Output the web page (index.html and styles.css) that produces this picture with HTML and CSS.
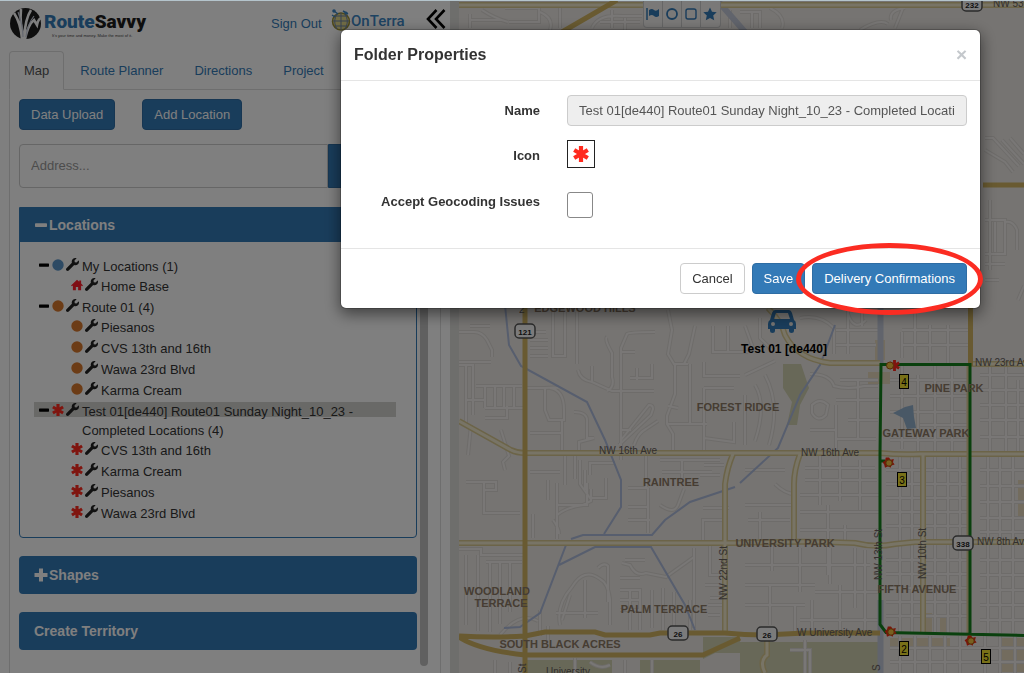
FILE: index.html
```html
<!DOCTYPE html>
<html lang="en">
<head>
<meta charset="utf-8">
<meta name="viewport" content="width=device-width, initial-scale=1">
<title>RouteSavvy</title>
<link rel="stylesheet" href="styles.css">
</head>
<body>
<svg class="defs" width="0" height="0" aria-hidden="true">
  <defs>
    <symbol id="wrench" viewBox="0 0 512 512"><path d="M507.73 109.1c-2.24-9.03-13.54-12.09-20.12-5.51l-74.36 74.36-67.88-11.31-11.31-67.88 74.36-74.36c6.62-6.62 3.43-17.9-5.66-20.16-47.38-11.74-99.55.91-136.58 37.93-39.64 39.64-50.55 97.1-34.05 147.2L18.74 402.76c-24.99 24.99-24.99 65.51 0 90.5 24.99 24.99 65.51 24.99 90.5 0l213.21-213.21c50.12 16.71 107.47 5.68 147.37-34.22 37.07-37.07 49.7-89.32 37.91-136.73z"/></symbol>
    <symbol id="asterisk" viewBox="0 0 16 16"><path d="M8 0V16M1.200 4l13.600 8M14.800 4L1.200 12" fill="none" stroke="#ff2a1e" stroke-width="4.200"/></symbol>
    <symbol id="home" viewBox="0 0 16 16"><path fill="#ff1d2a" d="M8 1L0 8.5l1.2 1.2L2.5 8.500V15h4v-4.500h3V15h4V8.500l1.300 1.200L16 8.500l-2.500-2.400V2h-2.500v1.800z"/></symbol>
    <symbol id="minus" viewBox="0 0 10 10"><rect y="3.500" width="10" height="3.200" rx=".6"/></symbol>
    <symbol id="plus" viewBox="0 0 14 14"><path d="M5 .5h4V5h4.500v4H9v4.500H5V9H.5V5H5z"/></symbol>
    <symbol id="dot" viewBox="0 0 12 12"><circle cx="6" cy="6" r="5.700"/></symbol>
  </defs>
</svg>

<div class="app">
  <aside class="sidebar">
    <header class="brand">
      <div class="logo">
        <svg class="logo-mark" viewBox="0 0 33 32" aria-hidden="true">
          <circle cx="16.500" cy="15.500" r="15.500" fill="#1c1c1c"/>
          <path d="M5 5c4 6 7 14 8 26M12 1c-1 10 0 20 3 30M15 30C16 16 18 8 22 2M16 31c2-9 5-16 9-19l3 5c1-5 3-7 5-7" fill="none" stroke="#fff" stroke-width="2.600"/>
          <path d="M9 4c3 8 5 14 5 25M17 29c1-10 4-16 8-21" fill="none" stroke="#c9cfdf" stroke-width="1.200"/>
        </svg>
        <div class="logo-words">
          <span class="logo-name"><b class="blue">Route</b><b>Savvy</b></span>
          <span class="logo-tag">It's your time and money. Make the most of it.</span>
        </div>
      </div>
      <a class="sign-out" href="#">Sign Out</a>
      <div class="partner">
        <svg class="globe" viewBox="0 0 20 24" aria-hidden="true">
          <circle cx="10" cy="13.500" r="8.500" fill="#e2d88b" stroke="#9a8f35" stroke-width="1.500"/>
          <path d="M2 13h16M4 8h12M4 18h12M10 5v17M6 6c-3 5-3 10 0 15M14 6c3 5 3 10 0 15" fill="none" stroke="#6d83a8" stroke-width="1"/>
          <path d="M3 3l4 3M12 3l5 3M1 7l3 2" stroke="#3c86c4" stroke-width="1.500"/>
          <circle cx="3" cy="3" r="1.800" fill="#3c86c4"/><circle cx="15" cy="5" r="1.600" fill="#3c86c4"/>
        </svg>
        <span class="partner-name">OnTerra</span>
      </div>
      <button class="collapse" type="button" aria-label="Collapse panel">
        <svg viewBox="0 0 20 20"><path d="M10.500 1L2 10l8.500 9M18.500 1L10 10l8.500 9" fill="none" stroke="#000" stroke-width="2.600"/></svg>
      </button>
    </header>

    <nav class="tabs">
      <a class="tab active" href="#">Map</a>
      <a class="tab" href="#">Route Planner</a>
      <a class="tab" href="#">Directions</a>
      <a class="tab" href="#">Project</a>
    </nav>

    <div class="pane">
      <div class="pane-content">
        <div class="actions">
          <button class="btn primary" type="button">Data Upload</button>
          <button class="btn primary" type="button">Add Location</button>
        </div>
        <div class="search">
          <input class="search-input" type="text" placeholder="Address..." aria-label="Address">
          <button class="search-go" type="button" aria-label="Search"></button>
        </div>

        <section class="panel">
          <h2 class="panel-title open"><svg class="title-icon"><use href="#minus"/></svg>Locations</h2>
          <ul class="tree">
            <li><div class="row"><svg class="fold"><use href="#minus"/></svg><svg class="mark blue-dot"><use href="#dot"/></svg><svg class="wrench"><use href="#wrench"/></svg><span class="label">My Locations (1)</span></div>
              <ul>
                <li class="row child"><svg class="mark"><use href="#home"/></svg><svg class="wrench"><use href="#wrench"/></svg><span class="label">Home Base</span></li>
              </ul>
            </li>
            <li><div class="row"><svg class="fold"><use href="#minus"/></svg><svg class="mark orange-dot"><use href="#dot"/></svg><svg class="wrench"><use href="#wrench"/></svg><span class="label">Route 01 (4)</span></div>
              <ul>
                <li class="row child"><svg class="mark orange-dot"><use href="#dot"/></svg><svg class="wrench"><use href="#wrench"/></svg><span class="label">Piesanos</span></li>
                <li class="row child"><svg class="mark orange-dot"><use href="#dot"/></svg><svg class="wrench"><use href="#wrench"/></svg><span class="label">CVS 13th and 16th</span></li>
                <li class="row child"><svg class="mark orange-dot"><use href="#dot"/></svg><svg class="wrench"><use href="#wrench"/></svg><span class="label">Wawa 23rd Blvd</span></li>
                <li class="row child"><svg class="mark orange-dot"><use href="#dot"/></svg><svg class="wrench"><use href="#wrench"/></svg><span class="label">Karma Cream</span></li>
              </ul>
            </li>
            <li><div class="row selected"><svg class="fold"><use href="#minus"/></svg><svg class="mark"><use href="#asterisk"/></svg><svg class="wrench"><use href="#wrench"/></svg><span class="label">Test 01[de440] Route01 Sunday Night_10_23 - Completed Locations (4)</span></div>
              <ul>
                <li class="row child"><svg class="mark"><use href="#asterisk"/></svg><svg class="wrench"><use href="#wrench"/></svg><span class="label">CVS 13th and 16th</span></li>
                <li class="row child"><svg class="mark"><use href="#asterisk"/></svg><svg class="wrench"><use href="#wrench"/></svg><span class="label">Karma Cream</span></li>
                <li class="row child"><svg class="mark"><use href="#asterisk"/></svg><svg class="wrench"><use href="#wrench"/></svg><span class="label">Piesanos</span></li>
                <li class="row child"><svg class="mark"><use href="#asterisk"/></svg><svg class="wrench"><use href="#wrench"/></svg><span class="label">Wawa 23rd Blvd</span></li>
              </ul>
            </li>
          </ul>
        </section>

        <h2 class="panel-title"><svg class="title-icon plus"><use href="#plus"/></svg>Shapes</h2>
        <h2 class="panel-title">Create Territory</h2>
      </div>
      <div class="scroll-thumb"></div>
    </div>
  </aside>

  <main class="map">
    <svg class="map-canvas" viewBox="459 1 565 672" preserveAspectRatio="xMinYMin slice" role="img" aria-label="Street map">
      <defs>
        <path id="streets" d="
          M470 326h20M459 332h15q8 0 13 8l5 10v7M459 362h32M459 365h14v50M466 365v60M476 386h46M485 386v22M495 386v22M504 386v22M514 386v22M485 408h38M466 400h20M485 418h22v-8M507 418v-12M471 425l-3 30M501 430l8 26-6 6 2 8M466 482h30v8h-12v-8
          M530 332h16M530 340h18M530 348h18M530 356h18M553 310v46h12v-44M577 312v52M559 388q-4-1-14 0h-18M545 388v22l4 10h15v-10q0-20-14-22M530 433h32v18M562 420v22M574 412q14 0 13 10v16h7l-15 4v10
          M578 370q2 10 14 12l20 9h42M607 391q8-4 5-14v-24q-8-14-5-16M592 366v16M630 378h22v-14M637 368v12M621 460v-112l6-14q2-2 28-2M621 352h14M621 440l28-35q4 0 4 4l-2 6-32 30M621 430h10M634 445q4-12 12-16l12-8
          M668 310l4 20-4 24 6 10h14M684 364l5-10 6-28M675 364v30l-8 22v8l6 10v18M690 364v60M668 406l10 2M667 424h40M713 326v26h35M728 326v26M704 362v14h36M704 388v62M704 388h30M704 438l30 4v-20
          M565 455v30M575 455v24M585 470v20M590 475v-12h25M560 472h-30M548 480v20M580 460v24l10 14h16v-20M646 456v32M660 460h60M662 472h50M682 460v24M704 465h20M700 475h20M628 507h20M628 520h22M648 488v45M628 488h20M660 505q14 10 18 0l6-16
          M466 555v70M478 555v76M490 562v70M500 562v62M510 562v50M459 549h22v6h42M486 562h36M557 483v56M557 505h30v-22M553 520q6 8 6 14M557 515q10-8 26-10l8-4v-12M533 514v24M484 483v30h36
          M560 625q-4-20 12-38 12-20 28-8 8 4 10 20v26M556 613h42M585 580v38M570 595l-8 25M620 590h20v40M620 600h20M620 610h20M630 590v40M598 568q6-6 10-2v36M622 563l8 2q6 12 16 8l20 4 28-20M640 578h-20M652 590v38M663 588v42M674 592v38M690 600v30M694 548v80M710 545v30h14M705 585h20M710 598h14M708 605h16M708 615h12M703 508h26M703 540v-20h20
          M645 560h-20M548 640v-14M540 610v26M500 635q20-24 38-14M575 658v15M590 662q10 8 20 3M625 660v13M652 660v13M495 660v13M510 662v11
          M745 326l8 22M760 318v20l14 14M800 318q20-4 34 10v26M848 314q6 18 18 6M836 330h44M836 345h40M848 310v44M862 312v14M836 400h44M840 380h38M745 395v50M755 385q12 20 0 56M765 375q16 30 4 70M745 375l30-14M810 374q20 0 24 12 14 4 30 0h14M812 405q8-8 16 0l-2 10q-8 8-14-2zM836 405v34h40M858 380v60M848 420h30M810 430h26v22
          M745 470h40M805 468h70M805 480h72M820 455v50M840 455v46M860 460v50M745 505h46M800 495h80M800 512h80M828 505v70M748 520h42M760 512v30M775 484q10 10 20 10M800 530h80M845 525v20M745 565h125M772 543v28M800 548v44M830 548v36M745 585h70M855 548v60M815 592h64M840 585v45M865 550v80M745 605h60M770 585v40M795 605v26M800 620h78M812 600v30
          M902 330h66M902 345h66M902 332v26M915 310v50M930 325v36M948 325v38M890 380h78M890 396h78M902 364v85M918 375v76M935 364v88M952 364v92M890 412h76M920 425h50M890 440h80M886 470h84M886 484h84M886 498h84M886 512h84M886 526h84M900 455v178M912 455v178M935 455v178M948 455v178M960 455v178M886 560h84M886 574h84M886 588h84M886 602h84M886 616h84
          M980 375h44M980 390h44M980 405h44M980 420h44M980 437h44M990 364v90M1006 364v90M1018 380v74M980 470h44M980 486h44M980 502h44M980 518h44M980 532h44M988 455v178M1000 455v178M1013 455v178M980 560h44M980 575h44M980 590h44M980 605h44M980 620h44
          M890 648h134M890 662h134M900 636v37M915 636v37M930 636v37M945 636v37M960 636v37M985 636v37M1000 636v37M1015 636v37M790 650h20v23M805 640v33
          M985 138h8l26 28M1002 140l22 24M1010 138l14 16M985 150l20 12 8 10
          M985 220h20v34h-20M995 222v30M1005 222q8-2 12 8v20M985 264h20M985 280h14M990 200v70M1024 286l-6 14
          M470 14v14M470 20h30M482 10q12 8 26 12M505 8h34v14h-30M540 12q14 6 10 18M560 8v20M592 28q6-14 30-12h20M612 10v18M625 18v12M600 22h40M730 10v18M740 12h20v16M752 12v16M770 8q16 8 12 20M860 30q20-12 28-6M895 28l8-20M905 8q-16 2-14 12"/>
        <path id="avenues" d="M459 421l52 29q6 3 14 3h355q20 2 40 1h104M459 543h276q60-2 90-1l30 1q20 5 40 1l20-2h109M725 633V484q2-16 8-30M794 540v-56q0-14 6-30M923 455v177M768 308q14 14 17 27 12 24 45 28h50M459 5h565M970 364h54M765 673q-6-12 2-18v-18"/>
        <g id="shield"><rect x="-10" y="-7" width="20" height="14" rx="4" fill="#f7f7f7" stroke="#555" stroke-width="1.500"/></g>
        <g id="stop"><path transform="scale(.8)" d="M0-7l2 3 4-1-1 4 2 3-4 1-1 3-3-2-4 2-1-4-2-3 3-2 1-4z" fill="#f02a10"/><circle r="3.200" fill="#f0c040" stroke="#b05a10"/></g>
      </defs>
      <rect class="land" x="459" y="0" width="900" height="1000"/>
      <g class="park">
        <path d="M783 364h18l8 24-9 17-3 20h-10l5-23-9-14zM527 660h85v13h-85zM640 660h60v13h-60zM703 637h37v16h-25l-12 6zM740 642h138v31H740z"/>
      </g>
      <g class="town"><path d="M922 613h10v20h-10zM890 638h60v8h-60zM1000 638h24v34h-24zM875 340h10v20h-10zM868 372h22v12h-22zM1018 480h6v40h-6zM940 618h8v14h-8z"/></g>
      <use href="#streets" class="street-case"/>
      <use href="#streets" class="street"/>
      <path class="water-fill" d="M893 413l12-6 8-2 1 12 2 11-9 1-4-11z"/>
      <path class="creek" d="M505 305l4 40 12 21 66 36 18 38 16 40v27l-17 27M571 539l12-4h69l13-15 25-18 45-15M566 545l-26 68-20 14-16 1M559 565l36-18h56l34 58 10 25M835 325l-15 40-20 30-22 53-38 35M448 8l5 20"/>
      <path class="canal" d="M880.500 300v64M880.500 600v73M717 0l28 32"/>
      <use href="#avenues" class="road-case"/>
      <use href="#avenues" class="road"/>
      <g class="highway">
        <path d="M525 300v373M459 636q36 2 66 0l20-4h50l10 3h45l10-2h65q20 2 40 2l40-2h75M459 637q20 13 66 18h178l37-17M970.500 300v66M562 32l55-32M983 185h41"/>
        <path class="thin" d="M968 364v270"/>
      </g>
      <path class="route" d="M970 634V364.500h-89l-1 90v170l6 8 138 3"/>
      <path class="route" d="M880 461h5"/>

      <g class="place" text-anchor="middle">
        <text x="585" y="312">EDGEWOOD HILLS</text>
        <text x="738" y="411">FOREST RIDGE</text>
        <text x="671" y="486">RAINTREE</text>
        <text x="954" y="392">PINE PARK</text>
        <text x="926" y="437">GATEWAY PARK</text>
        <text x="785" y="547">UNIVERSITY PARK</text>
        <text x="497" y="595">WOODLAND</text>
        <text x="501" y="607">TERRACE</text>
        <text x="664" y="613">PALM TERRACE</text>
        <text x="560" y="648">SOUTH BLACK ACRES</text>
        <text x="917" y="593">FIFTH AVENUE</text>
      </g>
      <g class="road-name">
        <text x="519" y="313">2</text>
        <text x="599" y="454">NW 16th Ave</text>
        <text x="801" y="456">NW 16th Ave</text>
        <text x="975" y="366">NW 23rd Ave</text>
        <text x="977" y="545">NW 8th Ave</text>
        <text x="797" y="636">W University Ave</text>
        <text x="993" y="7">NW 53rd Ave</text>
        <text x="546" y="675">University</text>
        <text transform="translate(727 600) rotate(-90)">NW 22nd St</text>
        <text transform="translate(882 580) rotate(-90)">NW 13th St</text>
        <text transform="translate(926 579) rotate(-90)">NW 10th St</text>
        <text transform="translate(526 673) rotate(-90)">St</text>
        <text transform="translate(880 671) rotate(-90)">S</text>
      </g>
      <g class="shield-text" text-anchor="middle">
        <use href="#shield" x="525" y="331"/><text x="525" y="335">121</text>
        <use href="#shield" x="972" y="4"/><text x="972" y="8">232</text>
        <use href="#shield" x="678" y="633"/><text x="678" y="637">26</text>
        <use href="#shield" x="767" y="634"/><text x="767" y="638">26</text>
        <use href="#shield" x="963" y="543"/><text x="963" y="547">338</text>
      </g>

      <g class="vehicle" transform="translate(768 310)">
        <path fill-rule="evenodd" d="M7 0h14q2 0 3 3l2 7q2 1 2 4v5h-2v2q0 2-2.500 2T21 21v-2H7v2q0 2-2.500 2T2 21v-2H0v-5q0-3 2-4l2-7q1-3 3-3zM8 3L6 9h16l-2-6zM5 12a2 2 0 100 4 2 2 0 000-4zM23 12a2 2 0 100 4 2 2 0 000-4z"/>
      </g>
      <text class="vehicle-name" x="784" y="353" text-anchor="middle">Test 01 [de440]</text>

      <use href="#asterisk" x="889" y="360" width="11" height="11"/>
      <circle cx="890" cy="365.500" r="3.500" fill="#f0c040" stroke="#b05a10"/>
      <use href="#stop" x="889" y="463"/><use href="#stop" x="891" y="632"/><use href="#stop" x="971" y="641"/>
      <g class="stop-number" text-anchor="middle">
        <rect x="899.500" y="374.500" width="9" height="14"/><text x="904" y="386">4</text>
        <rect x="897.500" y="472.500" width="9" height="14"/><text x="902" y="484">3</text>
        <rect x="899.500" y="641.500" width="9" height="14"/><text x="904" y="653">2</text>
        <rect x="981.500" y="649.500" width="9" height="14"/><text x="986" y="661">5</text>
      </g>
    </svg>
    <div class="map-tools">
      <button type="button" aria-label="Flag"><svg viewBox="0 0 14 14"><path d="M1 1v12" stroke="#337ab7" stroke-width="1.500"/><path fill="#337ab7" d="M3 3q3-2 5 0t5-1v7q-3 2-5 0T3 9z"/></svg></button>
      <button type="button" aria-label="Circle"><svg viewBox="0 0 14 14"><circle cx="7" cy="7" r="5" fill="none" stroke="#337ab7" stroke-width="1.800"/></svg></button>
      <button type="button" aria-label="Rectangle"><svg viewBox="0 0 14 14"><rect x="2" y="2" width="10" height="10" rx="2" fill="none" stroke="#337ab7" stroke-width="1.400"/></svg></button>
      <button type="button" aria-label="Star"><svg viewBox="0 0 14 14"><path fill="#337ab7" d="M7 .5l2 4.300 4.700.5-3.500 3.200 1 4.700L7 10.900l-4.200 2.300 1-4.700L.3 5.300 5 4.800z"/></svg></button>
    </div>
  </main>
</div>

<div class="backdrop">
  <form class="modal" role="dialog" aria-labelledby="modal-title">
    <header class="modal-header">
      <h1 id="modal-title">Folder Properties</h1>
      <button class="close" type="button" aria-label="Close">×</button>
    </header>
    <div class="modal-body">
      <label for="folder-name">Name</label>
      <input id="folder-name" class="name-input" type="text" value="Test 01[de440] Route01 Sunday Night_10_23 - Completed Locations" readonly>
      <label for="folder-icon">Icon</label>
      <button id="folder-icon" class="icon-picker" type="button"><svg><use href="#asterisk"/></svg></button>
      <label for="accept">Accept Geocoding Issues</label>
      <input id="accept" class="check" type="checkbox">
    </div>
    <footer class="modal-footer">
      <button class="btn plain" type="button">Cancel</button>
      <button class="btn primary" type="button">Save</button>
      <div class="highlighted">
        <button class="btn primary" type="button">Delivery Confirmations</button>
        <span class="ring"></span>
      </div>
    </footer>
  </form>
</div>
</body>
</html>
```

FILE: styles.css
```css
*,
*::before,
*::after {
  box-sizing: border-box;
}

body {
  margin: 0;
  font: 13px/18px "Liberation Sans", Arial, sans-serif;
  color: #333;
  background: #fff;
}

.defs {
  position: absolute;
}

button,
input {
  font: inherit;
  color: inherit;
}

button {
  cursor: pointer;
}

a {
  color: #337ab7;
  text-decoration: none;
}

ul {
  margin: 0;
  padding: 0;
  list-style: none;
}

.app {
  display: flex;
  height: 100vh;
  overflow: hidden;
  border-top: 1px solid #b4c4cc;
}

/* Sidebar */
.sidebar {
  flex: 0 0 450px;
  display: flex;
  flex-direction: column;
  padding-left: 9px;
}

.brand {
  display: flex;
  align-items: flex-start;
  height: 50px;
  padding-top: 7px;
}

.logo {
  display: flex;
  gap: 2px;
  width: 262px;
}

.logo-mark {
  width: 33px;
  height: 32px;
}

.logo-words {
  display: flex;
  flex-direction: column;
}

.logo-name {
  font: bold 19px/27px Roboto, "Liberation Sans", sans-serif;
  color: #1c1c1c;
}

.logo-name .blue {
  color: #337ab7;
}

.logo-tag {
  padding-left: 8px;
  font-size: 4px;
  line-height: 1px;
  color: #444;
}

.sign-out {
  width: 60px;
  padding-top: 7px;
}

.partner {
  display: flex;
  width: 95px;
}

.globe {
  width: 20px;
  height: 24px;
}

.partner-name {
  font: 500 15px/26px Roboto, "Liberation Sans", sans-serif;
  color: #3c86c4;
}

.collapse {
  padding: 0;
  border: 0;
  background: none;
}

.collapse svg {
  display: block;
  width: 20px;
  height: 22px;
}

.tabs {
  display: flex;
  gap: 1px;
  margin-right: 9px;
  border-bottom: 1px solid #ddd;
}

.tab {
  margin-bottom: -1px;
  padding: 10px 14px 9px;
  border: 1px solid transparent;
  border-radius: 4px 4px 0 0;
}

.tab.active {
  color: #555;
  background: #fff;
  border-color: #ddd #ddd #fff;
}

.pane {
  flex: 1;
  display: flex;
  gap: 3px;
  margin-right: 9px;
  padding: 9px 12px 7px 9px;
  border: solid #ddd;
  border-width: 0 1px;
}

.pane-content {
  flex: 1;
}

.scroll-thumb {
  width: 8px;
  border-radius: 4px;
  background: #c1c1c1;
}

.actions {
  display: flex;
  gap: 27px;
}

.btn {
  height: 31px;
  padding: 0 11px;
  border: 1px solid #2e6da4;
  border-radius: 4px;
}

.btn.primary {
  color: #fff;
  background: #337ab7;
}

.btn.plain {
  color: #333;
  background: #fff;
  border-color: #ccc;
}

.search {
  display: flex;
  height: 44px;
  margin: 14px 0 19px;
}

.search-input {
  flex: 1;
  min-width: 0;
  padding: 0 11px;
  border: 1px solid #ccc;
  border-radius: 4px 0 0 4px;
  background: #fff;
}

.search-input::placeholder {
  color: #999;
}

.search-go {
  width: 89px;
  border: 1px solid #2e6da4;
  border-radius: 0 4px 4px 0;
  background: #337ab7;
}

.panel {
  border: 1px solid #337ab7;
  border-radius: 0 0 4px 4px;
}

.panel-title {
  display: flex;
  align-items: center;
  height: 38px;
  margin: 18px 0 0;
  padding: 0 15px;
  border-radius: 4px;
  font-size: 14px;
  line-height: 18px;
  color: #fff;
  background: #337ab7;
}

.panel-title.open {
  height: 34px;
  margin: 0;
  border-radius: 0;
}

.title-icon {
  width: 12px;
  height: 12px;
  margin-right: 2px;
  fill: #fff;
}

.title-icon.plus {
  width: 14px;
  height: 14px;
  margin-right: 1px;
}

.tree {
  padding: 14px 20px 13px 14px;
}

.row {
  display: flex;
  align-items: flex-start;
  min-height: 20px;
  padding-left: 5px;
}

.row.child {
  min-height: 21px;
  padding-left: 37px;
}

.row.selected {
  background: linear-gradient(#d2d2ce, #d2d2ce) no-repeat 0 1px / 100% 15px;
}

.fold,
.mark,
.wrench {
  flex: none;
}

.fold {
  width: 10px;
  height: 10px;
  margin: 4px 3px 0 0;
}

.mark {
  width: 12px;
  height: 12px;
  margin: 3px 2px 0 0;
}

.blue-dot {
  fill: #5a94c8;
}

.orange-dot {
  fill: #d9782c;
}

.wrench {
  width: 13px;
  height: 13px;
  margin: 2px 3px 0 0;
  fill: #222;
}

.label {
  line-height: 19px;
  padding-top: 1px;
}

/* Map */
.map {
  flex: 1;
  position: relative;
  min-width: 0;
  border-left: 9px solid #dddcd9;
}

.map-canvas {
  display: block;
  width: 100%;
  height: 100%;
}

.land {
  fill: #ece8e4;
}

.park {
  fill: #d0d0b0;
}

.town {
  fill: #e6d8bc;
}

.water-fill {
  fill: #93b0cc;
}

.creek,
.canal,
.street,
.street-case,
.road,
.road-case,
.highway,
.route {
  fill: none;
}

.creek {
  stroke: #aebcdc;
  stroke-width: 2px;
}

.canal {
  stroke: #c2c8d8;
  stroke-width: 6px;
}

.street-case {
  stroke: #dcd8d4;
  stroke-width: 4px;
}

.street {
  stroke: #f2efec;
  stroke-width: 2px;
}

.road-case {
  stroke: #d8c890;
  stroke-width: 6px;
}

.road {
  stroke: #f0e9cc;
  stroke-width: 3px;
}

.highway {
  stroke: #d2b562;
  stroke-width: 5px;
}

.highway .thin {
  stroke: #dccb98;
  stroke-width: 3px;
}

.route {
  stroke: #14801c;
  stroke-width: 3px;
}

.place {
  font-size: 11px;
  font-weight: bold;
  fill: #8c7a66;
}

.road-name {
  font-size: 10px;
  fill: #66605c;
}

.shield-text {
  font-size: 8px;
  font-weight: bold;
  fill: #222;
}

.vehicle {
  fill: #337ab7;
}

.vehicle-name {
  font-size: 12px;
  font-weight: bold;
  fill: #000;
}

.stop-number {
  font-size: 10px;
}

.stop-number rect {
  fill: #f0e030;
  stroke: #000;
}

.map-tools {
  position: absolute;
  top: 0;
  left: 184px;
  display: flex;
  border: 1px solid #ccc;
  border-top: 0;
  border-radius: 0 0 4px 4px;
  background: #f4f2f0;
}

.map-tools button {
  width: 19px;
  height: 26px;
  padding: 0 2px;
  border: 0;
  border-right: 1px solid #ccc;
  background: none;
}

.map-tools button:last-child {
  border-right: 0;
}

.map-tools svg {
  display: block;
  width: 14px;
  height: 14px;
}

/* Dialog */
.backdrop {
  position: fixed;
  inset: 1px 0 0;
  display: flex;
  align-items: flex-start;
  justify-content: flex-end;
  padding: 28px 43px 28px 28px;
  background: rgba(0, 0, 0, 0.5);
}

.modal {
  width: 641px;
  border: 1px solid #999;
  border-color: rgba(0, 0, 0, 0.2);
  border-radius: 6px;
  background: #fff;
  background-clip: padding-box;
  box-shadow: 0 5px 15px rgba(0, 0, 0, 0.5);
}

.modal-header {
  display: flex;
  justify-content: space-between;
  align-items: center;
  padding: 14px 13px;
  border-bottom: 1px solid #e5e5e5;
}

.modal-header h1 {
  margin: 0;
  font-size: 16px;
  line-height: 22px;
}

.close {
  height: 22px;
  padding: 0;
  border: 0;
  font-size: 19px;
  font-weight: bold;
  line-height: 18px;
  color: #c4c8cc;
  background: none;
}

.modal-body {
  display: grid;
  grid-template-columns: 186px 1fr;
  grid-template-rows: 31px 32px auto;
  gap: 14px 27px;
  align-items: start;
  padding: 14px 13px 30px;
}

.modal-body label {
  padding-top: 8px;
  font-weight: bold;
  line-height: 16px;
  text-align: right;
}

.name-input {
  width: 100%;
  height: 31px;
  padding: 0 11px;
  border: 1px solid #ccc;
  border-radius: 4px;
  color: #555;
  background: #eee;
}

.icon-picker {
  width: 28px;
  height: 28px;
  padding: 5px;
  border: 1px solid #222;
  background: #fff;
}

.icon-picker svg {
  display: block;
  width: 16px;
  height: 16px;
}

.check {
  appearance: none;
  width: 26px;
  height: 26px;
  margin: 6px 0 0;
  border: 1px solid #888;
  border-radius: 3px;
  background: #fff;
}

.modal-footer {
  display: flex;
  justify-content: flex-end;
  gap: 7px;
  padding: 14px 13px;
  border-top: 1px solid #e5e5e5;
}

.highlighted {
  position: relative;
}

.ring {
  position: absolute;
  inset: -20px -16px -21px;
  border: 5px solid #fb2c22;
  border-radius: 50%;
  pointer-events: none;
}
```
